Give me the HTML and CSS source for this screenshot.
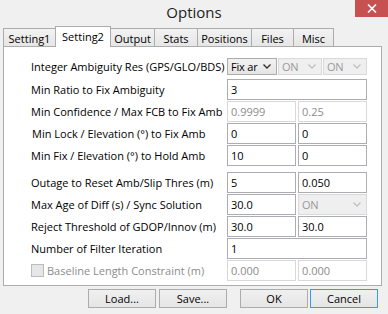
FILE: index.html
```html
<!DOCTYPE html>
<html lang="en">
<head>
  <meta charset="UTF-8"/>
  <title>Options</title>
  <link rel="stylesheet" href="styles.css">
</head>
<body>
  <div class="window">
    <div class="titlebar">
      <span class="title">Options</span>
      <span class="close">
        <svg width="10" height="9" viewBox="0 0 10 9"><path d="M1 0.5 L9 8.5 M9 0.5 L1 8.5" stroke="#fff" stroke-width="1.6"/></svg>
      </span>
    </div>

    <div class="tabs">
      <div class="tab w-set1">Setting1</div>
      <div class="tab active w-set2">Setting2</div>
      <div class="tab w-out">Output</div>
      <div class="tab w-stats">Stats</div>
      <div class="tab w-pos">Positions</div>
      <div class="tab w-files">Files</div>
      <div class="tab w-misc">Misc</div>
    </div>

    <div class="page">
      <div class="row r-first">
        <span class="label">Integer Ambiguity Res (GPS/GLO/BDS)</span>
        <div class="fields">
          <div class="combo c-fix">Fix ar<svg class="chev" width="8" height="5" viewBox="0 0 8 5"><path d="M0.5 0.5 L4 4 L7.5 0.5" fill="none" stroke="#333" stroke-width="1.4"/></svg></div>
          <div class="combo off c-on">ON<svg class="chev" width="8" height="5" viewBox="0 0 8 5"><path d="M0.5 0.5 L4 4 L7.5 0.5" fill="none" stroke="#c2c2c2" stroke-width="1.4"/></svg></div>
          <div class="combo off c-on">ON<svg class="chev" width="8" height="5" viewBox="0 0 8 5"><path d="M0.5 0.5 L4 4 L7.5 0.5" fill="none" stroke="#c2c2c2" stroke-width="1.4"/></svg></div>
        </div>
      </div>

      <div class="row r-second">
        <span class="label">Min Ratio to Fix Ambiguity</span>
        <div class="fields"><div class="edit full">3</div></div>
      </div>

      <div class="row">
        <span class="label">Min Confidence / Max FCB to Fix Amb</span>
        <div class="fields">
          <div class="edit half off">0.9999</div>
          <div class="edit half off">0.25</div>
        </div>
      </div>

      <div class="row">
        <span class="label shift">Min Lock / Elevation (°) to Fix Amb</span>
        <div class="fields">
          <div class="edit half">0</div>
          <div class="edit half">0</div>
        </div>
      </div>

      <div class="row">
        <span class="label">Min Fix / Elevation (°) to Hold Amb</span>
        <div class="fields">
          <div class="edit half">10</div>
          <div class="edit half">0</div>
        </div>
      </div>

      <div class="row r-group">
        <span class="label">Outage to Reset Amb/Slip Thres (m)</span>
        <div class="fields">
          <div class="edit half">5</div>
          <div class="edit half">0.050</div>
        </div>
      </div>

      <div class="row">
        <span class="label">Max Age of Diff (s) / Sync Solution</span>
        <div class="fields">
          <div class="edit half">30.0</div>
          <div class="combo off half">ON<svg class="chev" width="8" height="5" viewBox="0 0 8 5"><path d="M0.5 0.5 L4 4 L7.5 0.5" fill="none" stroke="#c2c2c2" stroke-width="1.4"/></svg></div>
        </div>
      </div>

      <div class="row">
        <span class="label">Reject Threshold of GDOP/Innov (m)</span>
        <div class="fields">
          <div class="edit half">30.0</div>
          <div class="edit half">30.0</div>
        </div>
      </div>

      <div class="row">
        <span class="label">Number of Filter Iteration</span>
        <div class="fields"><div class="edit full">1</div></div>
      </div>

      <div class="row">
        <span class="label check-label"><span class="checkbox"></span>Baseline Length Constraint (m)</span>
        <div class="fields">
          <div class="edit half off">0.000</div>
          <div class="edit half off">0.000</div>
        </div>
      </div>
    </div>

    <div class="buttons">
      <button class="btn b-load">Load...</button>
      <button class="btn b-save">Save...</button>
      <button class="btn b-ok">OK</button>
      <button class="btn b-cancel default">Cancel</button>
    </div>
  </div>
</body>
</html>
```

FILE: styles.css
```css
* {
  margin: 0; padding: 0; box-sizing: border-box;
}
body {
  width: 388px; height: 314px; overflow: hidden;
  background: #f0f0f0;
  font-family: "Open Sans", "Liberation Sans", sans-serif;
  font-size: 11px;
  color: #000;
}
.window {
  position: relative;
  height: 314px;
}

/* title bar */
.titlebar {
  height: 26px;
  display: flex; justify-content: center; align-items: center;
}
.title {
  font-size: 15px;
  color: #222;
  margin-top: -2px;
}
.close {
  position: absolute; top: 0; right: 0;
  width: 33px; height: 17px;
  background: #c75050;
  display: flex; align-items: center; justify-content: center;
}

/* tabs */
.tabs {
  position: relative; z-index: 1;
  display: flex; align-items: flex-end;
  height: 20px;
  margin-left: 3px;
}
.tab {
  height: 18px;
  margin-left: -1px;
  border: 1px solid #acacac; border-bottom: none;
  background: linear-gradient(#f2f2f2, #e6e6e6);
  display: flex; justify-content: center; align-items: center;
  padding-top: 1px;
}
.tab:first-child { margin-left: 0; }
.tab.active {
  position: relative; z-index: 2;
  height: 21px;
  margin-bottom: -1px;
  background: #fff;
  align-items: flex-start;
  padding-top: 2px;
}
.w-set1 { width: 53px; }
.w-set2 { width: 56px; }
.w-out { width: 45px; }
.w-stats { width: 44px; }
.w-pos { width: 55px; }
.w-files { width: 43px; }
.w-misc { width: 41px; }

/* tab page */
.page {
  margin-left: 3px;
  width: 379px; height: 240px;
  border: 1px solid #acacac;
  background: #fff;
  padding-left: 27px;
}
.row {
  display: flex; align-items: center;
  height: 21px;
  margin-top: 1px;
}
.row.r-first { height: 17px; margin-top: 11px; }
.row.r-second { margin-top: 4px; }
.row.r-group { margin-top: 6px; }
.label {
  width: 196px;
  white-space: nowrap;
}
.label.shift { padding-left: 1px; }
.fields {
  display: flex; gap: 2px;
  height: 100%;
}
.r-first .fields { gap: 1px; }

.edit {
  height: 100%;
  border: 1px solid #abadb3;
  background: #fff;
  padding-left: 3px;
  display: flex; align-items: center;
}
.edit.full { width: 140px; }
.half { width: 69px; }
.edit.off {
  border-color: #d9d9d9;
  color: #8c8c8c;
}

.combo {
  height: 100%;
  border: 1px solid #acacac;
  background: linear-gradient(#f2f2f2, #e5e5e5);
  padding: 0 5px 0 3px;
  display: flex; align-items: center; justify-content: space-between;
  letter-spacing: -0.2px;
}
.combo.off {
  border-color: #d9d9d9;
  background: #efefef;
  color: #9a9a9a;
}
.c-fix { width: 50px; }
.c-on { width: 44px; }

.check-label {
  display: flex; align-items: center;
  color: #8c8c8c;
}
.checkbox {
  width: 13px; height: 13px;
  border: 1px solid #bcbcbc;
  background: #e6e6e6;
  margin-right: 3px;
}

/* bottom buttons */
.buttons {
  display: flex;
  margin-top: 3px;
  padding-left: 88px;
}
.btn {
  width: 68px; height: 19px;
  border: 1px solid #acacac;
  background: linear-gradient(#f0f0f0, #e5e5e5);
  font-family: inherit; font-size: 11px;
  color: #000;
}
.b-save { margin-left: 3px; }
.b-ok { margin-left: 13px; }
.b-cancel { margin-left: 2px; }
.btn.default { border-color: #3399ff; }
```
